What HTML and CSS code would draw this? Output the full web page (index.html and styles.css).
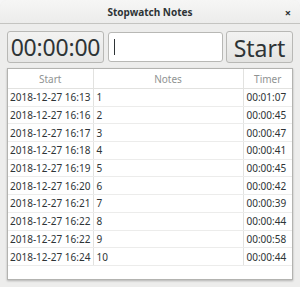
FILE: index.html
```html
<!DOCTYPE html>
<html>
<head>
<meta charset="utf-8">
<link rel="stylesheet" href="styles.css">
</head>
<body>
<div class="window">
  <header class="titlebar">
    <span class="title">Stopwatch Notes</span>
    <span class="close">×</span>
  </header>
  <main class="content">
    <div class="toolbar">
      <div class="clock">00:00:00</div>
      <div class="entry"><span class="caret"></span></div>
      <button class="start">Start</button>
    </div>
    <div class="list">
      <table>
        <colgroup><col class="c1"><col class="c2"><col class="c3"></colgroup>
        <thead><tr><th>Start</th><th>Notes</th><th>Timer</th></tr></thead>
        <tbody>
          <tr><td>2018-12-27 16:13</td><td>1</td><td>00:01:07</td></tr>
          <tr><td>2018-12-27 16:16</td><td>2</td><td>00:00:45</td></tr>
          <tr><td>2018-12-27 16:17</td><td>3</td><td>00:00:47</td></tr>
          <tr><td>2018-12-27 16:18</td><td>4</td><td>00:00:41</td></tr>
          <tr><td>2018-12-27 16:19</td><td>5</td><td>00:00:45</td></tr>
          <tr><td>2018-12-27 16:20</td><td>6</td><td>00:00:42</td></tr>
          <tr><td>2018-12-27 16:21</td><td>7</td><td>00:00:39</td></tr>
          <tr><td>2018-12-27 16:22</td><td>8</td><td>00:00:44</td></tr>
          <tr><td>2018-12-27 16:22</td><td>9</td><td>00:00:58</td></tr>
          <tr><td>2018-12-27 16:24</td><td>10</td><td>00:00:44</td></tr>
        </tbody>
      </table>
    </div>
  </main>
</div>
</body>
</html>
```
FILE: styles.css
```css
html, body {
  margin: 0;
  padding: 0;
  width: 300px;
  height: 287px;
  overflow: hidden;
  background: #f6f6f6;
}
.window {
  width: 300px;
  height: 287px;
  display: flex;
  flex-direction: column;
  background: #ededec;
  border-radius: 7px 7px 0 0;
  font-family: "Noto Sans", "DejaVu Sans", sans-serif;
  color: #2e3436;
  box-sizing: border-box;
}
.titlebar {
  height: 23px;
  flex: none;
  position: relative;
  display: flex;
  align-items: center;
  justify-content: center;
  background: linear-gradient(#f6f6f5, #ececeb);
  border-bottom: 1px solid #c4c4c1;
  border-radius: 7px 7px 0 0;
}
.title {
  font-weight: bold;
  font-size: 10px;
  color: #2e3436;
}
.close {
  position: absolute;
  right: 9px;
  top: 5px;
  font-size: 11px;
  font-weight: bold;
  color: #2e3436;
}
.content {
  flex: 1;
  display: flex;
  flex-direction: column;
  padding: 7px 7px 7px 7px;
  gap: 5px;
  min-height: 0;
}
.toolbar {
  display: flex;
  height: 32px;
  flex: none;
}
.clock {
  width: 97px;
  box-sizing: border-box;
  border: 1px solid #b8b8b5;
  border-radius: 3px;
  background: linear-gradient(#f3f3f2, #e6e6e5);
  font-size: 23px;
  line-height: 30px;
  text-align: center;
  color: #2e3436;
  letter-spacing: -0.2px;
}
.entry {
  margin: 1px 0 1px 4px;
  width: 115px;
  box-sizing: border-box;
  border: 1px solid #b8b8b5;
  border-radius: 3px;
  background: #ffffff;
  display: flex;
  align-items: center;
  padding-left: 5px;
}
.caret {
  width: 1px;
  height: 16px;
  background: #2e3436;
}
.start {
  margin-left: 3px;
  width: 67px;
  box-sizing: border-box;
  border: 1px solid #b8b8b5;
  border-radius: 3px;
  background: linear-gradient(#f3f3f2, #e3e3e1);
  font-family: "Noto Sans", "DejaVu Sans", sans-serif;
  font-size: 23px;
  color: #2e3436;
  padding: 0;
}
.list {
  flex: 1;
  background: #ffffff;
  border: 1px solid #b3b3b0;
  box-shadow: 0 1px 2px rgba(0,0,0,0.25);
  overflow: hidden;
}
table {
  border-collapse: collapse;
  table-layout: fixed;
  width: 284px;
  font-size: 10px;
}
col.c1 { width: 85px; }
col.c2 { width: 150px; }
col.c3 { width: 49px; }
th {
  font-weight: normal;
  color: #8f9392;
  height: 19px;
  padding: 0;
  border-bottom: 1px solid #e2e2e0;
  border-left: 1px solid #e2e2e0;
  text-align: center;
}
th:first-child, td:first-child { border-left: none; }
td {
  height: 16.7px;
  padding: 0 0 0 2px;
  border-bottom: 1px solid #ececeb;
  border-left: 1px solid #e2e2e0;
  white-space: nowrap;
  overflow: hidden;
  color: #2e3436;
}
td:nth-child(2) { padding-left: 3px; }
td:nth-child(3) { padding-left: 3px; }
```
